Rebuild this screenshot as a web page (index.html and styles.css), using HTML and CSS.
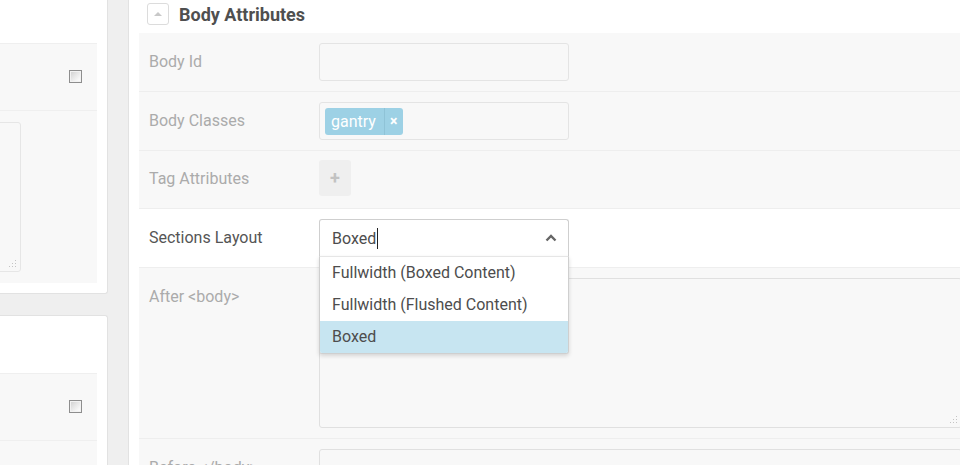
FILE: index.html
```html
<!DOCTYPE html>
<html lang="en">
<head>
<meta charset="utf-8">
<title>Body Attributes</title>
<link rel="stylesheet" href="styles.css">
</head>
<body>
<div class="page">
  <div class="left">
    <div class="card card-first">
      <div class="card-head card-head-first"></div>
      <div class="lrow lrow-check"><span class="cb"></span></div>
      <div class="lrow lrow-area">
        <div class="ltext">
          <svg class="grip" width="8" height="8" viewBox="0 0 8 8"><g fill="#c4c4c4"><rect x="6" y="0" width="1" height="1"/><rect x="3" y="3" width="1" height="1"/><rect x="6" y="3" width="1" height="1"/><rect x="0" y="6" width="1" height="1"/><rect x="3" y="6" width="1" height="1"/><rect x="6" y="6" width="1" height="1"/></g></svg>
        </div>
      </div>
    </div>
    <div class="card card-second">
      <div class="card-head card-head-second"></div>
      <div class="lrow lrow-check"><span class="cb"></span></div>
      <div class="lrow lrow-rest"></div>
    </div>
  </div>

  <div class="right">
    <div class="rhead">
      <span class="toggle"><svg width="8" height="5" viewBox="0 0 8 5"><polygon points="0,5 4,1 8,5" fill="#c8c8c8"/></svg></span>
      <h2 class="title">Body Attributes</h2>
    </div>

    <div class="frow">
      <div class="flabel">Body Id</div>
      <div class="finput"></div>
    </div>

    <div class="frow">
      <div class="flabel">Body Classes</div>
      <div class="finput tags">
        <span class="chip"><span class="chip-text">gantry</span><span class="chip-x">×</span></span>
      </div>
    </div>

    <div class="frow frow-tag">
      <div class="flabel">Tag Attributes</div>
      <span class="addbtn">+</span>
    </div>

    <div class="frow frow-active">
      <div class="flabel">Sections Layout</div>
      <div class="select-wrap">
        <div class="select">
          <span class="select-value">Boxed</span><span class="caret-cursor"></span>
          <svg class="chev" width="12" height="8" viewBox="0 0 12 8"><polyline points="1.5,6.5 6,2 10.5,6.5" fill="none" stroke="#666" stroke-width="2.4"/></svg>
        </div>
        <ul class="dropdown">
          <li class="opt">Fullwidth (Boxed Content)</li>
          <li class="opt">Fullwidth (Flushed Content)</li>
          <li class="opt opt-selected">Boxed</li>
        </ul>
      </div>
    </div>

    <div class="frow frow-area">
      <div class="flabel">After &lt;body&gt;</div>
      <div class="ftext">
        <svg class="grip grip-r" width="8" height="8" viewBox="0 0 8 8"><g fill="#c4c4c4"><rect x="6" y="0" width="1" height="1"/><rect x="3" y="3" width="1" height="1"/><rect x="6" y="3" width="1" height="1"/><rect x="0" y="6" width="1" height="1"/><rect x="3" y="6" width="1" height="1"/><rect x="6" y="6" width="1" height="1"/></g></svg>
      </div>
    </div>

    <div class="frow frow-area">
      <div class="flabel">Before &lt;/body&gt;</div>
      <div class="ftext"></div>
    </div>
  </div>
</div>
</body>
</html>
```

FILE: styles.css
```css
html, body {
  margin: 0;
  padding: 0;
}
body {
  width: 960px;
  height: 465px;
  overflow: hidden;
  background: #efefef;
  font-family: Roboto, "Liberation Sans", Arial, sans-serif;
  font-size: 16px;
  color: #555;
}
.page {
  display: flex;
  align-items: flex-start;
  height: 465px;
}

/* ---------- left column ---------- */
.left {
  width: 108px;
  flex: none;
  margin-right: 20px;
  display: flex;
  flex-direction: column;
}
.card {
  background: #fff;
  border-right: 1px solid #e2e2e2;
  padding-right: 10px;
  overflow: hidden;
}
.card-first {
  height: 293px;
  border-bottom: 1px solid #e2e2e2;
  border-bottom-right-radius: 3px;
}
.card-second {
  margin-top: 21px;
  height: 160px;
  border-top: 1px solid #e2e2e2;
  border-top-right-radius: 3px;
}
.card-head-first {
  height: 43px;
}
.card-head-second {
  height: 57px;
}
.lrow {
  background: #f8f8f8;
  border-top: 1px solid #efefef;
}
.lrow-check {
  height: 66px;
  display: flex;
  align-items: center;
  justify-content: flex-end;
  padding-right: 15px;
}
.lrow-area {
  height: 161px;
  padding: 11px 0 0 0;
}
.lrow-rest {
  height: 40px;
}
.cb {
  width: 11px;
  height: 11px;
  margin-top: -1px;
  border: 1px solid #8e8e8e;
  background: linear-gradient(135deg, #cfcfcf 0%, #f4f4f4 70%, #ffffff 100%);
  box-shadow: inset 0 0 0 1px #f2f2f2;
}
.ltext {
  position: relative;
  width: 118px;
  height: 148px;
  margin-left: -99px;
  border: 1px solid #e6e6e6;
  border-radius: 3px;
  background: #f8f8f8;
}
.grip {
  position: absolute;
  right: 3px;
  bottom: 3px;
}

/* ---------- right panel ---------- */
.right {
  flex: 1;
  min-width: 0;
  align-self: stretch;
  background: #fff;
  border-left: 1px solid #e2e2e2;
  padding-left: 10px;
  overflow: hidden;
}
.rhead {
  height: 28px;
  margin-bottom: 5px;
  display: flex;
  align-items: center;
  padding-left: 8px;
}
.toggle {
  width: 20px;
  height: 20px;
  border: 1px solid #dcdcdc;
  border-radius: 3px;
  display: flex;
  align-items: center;
  justify-content: center;
  box-sizing: content-box;
}
.toggle svg {
  margin-top: -2px;
}
.title {
  margin: 0 0 0 10px;
  font-size: 18px;
  font-weight: 700;
  color: #4f4f4f;
  line-height: 22px;
  padding-top: 1px;
}

.frow {
  display: flex;
  align-items: flex-start;
  padding: 10px 0 10px 10px;
  background: #f8f8f8;
  border-bottom: 1px solid #eeeeee;
  position: relative;
}
.flabel {
  width: 170px;
  flex: none;
  line-height: 38px;
  font-size: 16px;
  color: #ababab;
  white-space: nowrap;
}
.finput {
  width: 248px;
  height: 36px;
  border: 1px solid #e4e4e4;
  border-radius: 3px;
  background: #f8f8f8;
  flex: none;
}
.tags {
  display: flex;
  align-items: center;
  padding-left: 5px;
  width: 243px;
}
.chip {
  display: flex;
  align-items: stretch;
  height: 27px;
  background: #9dd1e5;
  border-radius: 3px;
  color: #fff;
}
.chip-text {
  padding: 0 8px 0 6px;
  line-height: 27px;
  font-size: 16px;
}
.chip-x {
  border-left: 1px solid #8fc3d7;
  padding: 0 6px 0 5px;
  line-height: 27px;
  font-size: 14px;
  font-weight: 700;
}

.frow-tag {
  padding-top: 9px;
}
.addbtn {
  width: 32px;
  height: 36px;
  background: #efefef;
  border-radius: 3px;
  color: #c2c2c2;
  font-size: 18px;
  font-weight: 700;
  display: flex;
  align-items: center;
  justify-content: center;
  line-height: 1;
}

.frow-active {
  background: #fff;
  z-index: 2;
}
.frow-active .flabel {
  color: #555;
}
.select-wrap {
  position: relative;
  width: 250px;
}
.select {
  box-sizing: border-box;
  height: 37px;
  border: 1px solid #cfcfcf;
  border-bottom: none;
  border-radius: 3px 3px 0 0;
  background: #fff;
  display: flex;
  align-items: center;
  padding-left: 12px;
  color: #4d4d4d;
  font-size: 16px;
}
.caret-cursor {
  display: inline-block;
  width: 1px;
  height: 21px;
  background: #222;
  margin-left: 1px;
}
.chev {
  margin-left: auto;
  margin-right: 11px;
}
.dropdown {
  position: absolute;
  left: 0;
  top: 37px;
  width: 250px;
  box-sizing: border-box;
  margin: 0;
  padding: 0;
  list-style: none;
  background: #fff;
  border: 1px solid #cfcfcf;
  border-top: 1px solid #e6e6e6;
  border-radius: 0 0 3px 3px;
  box-shadow: 0 2px 4px rgba(0, 0, 0, 0.14);
  overflow: hidden;
}
.opt {
  height: 32px;
  line-height: 32px;
  padding-left: 12px;
  color: #4d4d4d;
  font-size: 16px;
}
.opt-selected {
  background: #c7e5f1;
}

.frow-area {
  z-index: 1;
}
.ftext {
  position: relative;
  width: 641px;
  height: 148px;
  flex: none;
  border: 1px solid #e0e0e0;
  border-radius: 3px;
  background: #f8f8f8;
}
```
